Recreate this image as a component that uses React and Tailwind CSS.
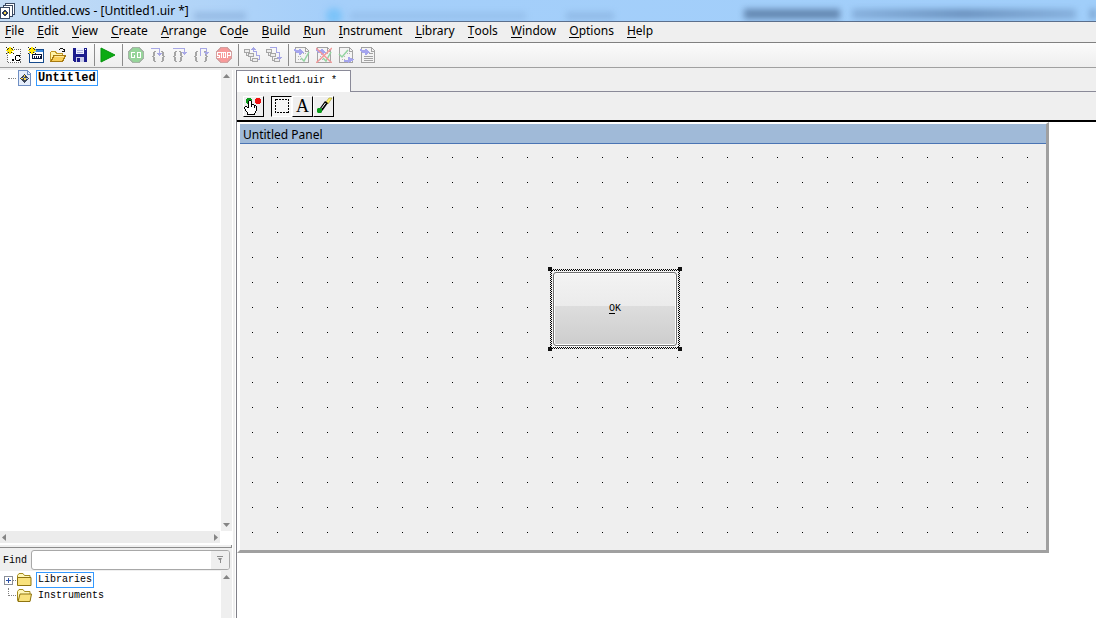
import React from "react";

const MENUS = [
  ["", "F", "ile"],
  ["", "E", "dit"],
  ["", "V", "iew"],
  ["", "C", "reate"],
  ["", "A", "rrange"],
  ["Co", "d", "e"],
  ["", "B", "uild"],
  ["", "R", "un"],
  ["", "I", "nstrument"],
  ["", "L", "ibrary"],
  ["", "T", "ools"],
  ["", "W", "indow"],
  ["", "O", "ptions"],
  ["", "H", "elp"],
];

function Icon({ children, crisp = true, className = "size-4", box = "0 0 16 16" }) {
  return (
    <svg
      viewBox={box}
      fill="none"
      aria-hidden="true"
      shapeRendering={crisp ? "crispEdges" : "auto"}
      className={`shrink-0 ${className}`}
    >
      {children}
    </svg>
  );
}

function Spark() {
  return (
    <>
      <path d="M0 0h8v7h-8z" fill="#fff" fillOpacity=".5" />
      <path d="M3 0h2v7h-2zM0 3h8v1h-8zM1 1h1v1h-1zM2 2h4v3h-4zM6 1h1v1h-1zM1 5h1v1h-1zM6 5h1v1h-1z" fill="#ffe800" />
      <path d="M0 0h1v1h-1zM7 0h1v1h-1zM0 6h1v1h-1zM7 6h1v1h-1zM2 1h1v1h-1zM5 1h1v1h-1zM2 5h1v1h-1zM5 5h1v1h-1zM1 2h1v1h-1zM6 2h1v1h-1z" fill="#222" />
    </>
  );
}

function NewSource() {
  return (
    <Icon>
      <path d="M1.500 2.500h13v13h-13z" fill="#fff" stroke="#666" strokeDasharray="1 1" />
      <path d="M6 12h2v2h-2z" fill="#000" />
      <path d="M10 8h4v1h-4zM9 9h1v4h-1zM10 13h4v1h-4zM13 9h1v1h-1zM13 12h1v1h-1z" fill="#000" />
      <Spark />
    </Icon>
  );
}

function NewPanel() {
  return (
    <Icon>
      <path d="M1.500 2.500h14v13h-14z" fill="#fff" stroke="#164a8c" />
      <path d="M2 3h13v2h-13z" fill="#3b8be0" />
      <path d="M4.500 7.500h9v4h-9z" fill="#fff" stroke="#08183b" />
      <path d="M6 9h1v2h-1zM8 9h1v2h-1zM10 9h1v2h-1zM12 9h1v2h-1z" fill="#08183b" />
      <Spark />
    </Icon>
  );
}

function OpenFolder() {
  return (
    <Icon>
      <path d="M9 2h1v1h-1zM10 1h3v1h-3zM13 2h1v1h-1zM14 2h1v3h-1zM12 4h2v1h-2z" fill="#111" />
      <path d="M.5 14.500v-9l1-1h4l1 2h6v3" fill="#fff3a8" stroke="#c39a2a" />
      <path d="M1 14.500l3-6h11.500l-3 6z" fill="#f9cf5a" stroke="#a87a10" />
      <path d="M5 9.500h9" stroke="#ffe9a0" />
    </Icon>
  );
}

function Save() {
  return (
    <Icon>
      <path d="M1 1h14v14h-13l-1-1z" fill="#1c1c8c" />
      <path d="M4 1h8v6h-8z" fill="#eef0ff" />
      <path d="M5 3h6v1h-6zM5 5h6v1h-6z" fill="#a9b0dc" />
      <path d="M4 10h8v5h-8z" fill="#c9cce8" />
      <path d="M5 11h3v4h-3z" fill="#1c1c8c" />
      <path d="M13 2h1v1h-1z" fill="#fff" />
    </Icon>
  );
}

function Play() {
  return (
    <Icon crisp={false}>
      <path d="M1 1l14 7l-14 7z" fill="#0cab14" stroke="#05940c" />
    </Icon>
  );
}

function Go() {
  return (
    <Icon>
      <path d="M5 0.5h6l4.500 4.500v6l-4.500 4.500h-6l-4.500-4.500v-6z" fill="#96d59a" stroke="#a4b5a5" />
      <path d="M7 5.500h-3.500v5h3v-2.500h-1M9.500 5.500h3v5h-3z" stroke="#fff" />
    </Icon>
  );
}

function Stop() {
  return (
    <Icon>
      <path d="M5 0.5h6l4.500 4.500v6l-4.500 4.500h-6l-4.500-4.500v-6z" fill="#f79a9a" stroke="#d3a0a0" />
      <path d="M4 5.500h-2.500v2.500h2v2.500h-2.500M4 5.500h3M5.500 5.500v5.500M7.500 5.500h2v5h-2zM11.500 11v-5.500h2.500v2.500h-2.500" stroke="#fff" />
    </Icon>
  );
}

const BRACE = "M2 4h2v1h-2zM1 5h2v4h-2zM0 9h2v1h-2zM1 10h2v4h-2zM2 14h2v1h-2z";

function Braces({ left, right, arrow, head }) {
  return (
    <Icon>
      <path transform={`translate(${left} 0)`} d={BRACE} fill="#a6a6a6" />
      <path transform={`translate(${right} 0) scale(-1 1)`} d={BRACE} fill="#a6a6a6" />
      <path d={arrow} stroke="#a9a9e6" />
      <path d={head} fill="#a9a9e6" />
    </Icon>
  );
}

const StepInto = () => (
  <Braces left={2} right={15} arrow="M1 1.500h8.500v5" head="M7 6h5v1h-1v1h-1v1h-1v-1h-1v-1h-1z" />
);
const StepOver = () => (
  <Braces left={1} right={11} arrow="M1 1.500h11.500v4" head="M10 5h5v1h-1v1h-1v1h-1v-1h-1v-1h-1z" />
);
const StepOut = () => (
  <Braces left={0} right={14} arrow="M6.500 9v-7.500h6v4" head="M10 5h5v1h-1v1h-1v1h-1v-1h-1v-1h-1z" />
);

function CallStack({ up }) {
  return (
    <Icon>
      <path d="M.5 2.500h5v3h-5zM4.500 6.500h5v3h-5zM8.500 11.500h5v3h-5zM2.500 6v2h2M6.500 10v3h2" stroke="#a6a6a6" fill="#ededed" />
      {up ? (
        <>
          <path d="M14 12.500h1.500v-4h-3v-4h-3v-3" stroke="#a5a5e6" />
          <path d="M9 0h1v1h1v1h1v1h-5v-1h1v-1h1z" fill="#a5a5e6" />
        </>
      ) : (
        <>
          <path d="M4 .5h6.500v5h3v6" stroke="#a5a5e6" />
          <path d="M11 10h5v1h-1v1h-1v1h-1v-1h-1v-1h-1z" fill="#a5a5e6" />
        </>
      )}
    </Icon>
  );
}

function Sheet({ kind }) {
  return (
    <Icon>
      <path d="M1.500 .5h10l3 3v12h-13z" fill="#f4f4f4" stroke="#a3a3a3" />
      <path d="M11.500 1v3h3" stroke="#a3a3a3" />
      {kind === "list" && <path d="M9 6.500h4M4 9.500h9M4 11.500h9M4 13.500h9" stroke="#a3a3a3" />}
      {kind !== "list" && <path d="M4 9.500h3M4 12.500h3M9 6.500h3" stroke="#b5b5b5" strokeDasharray="1 1" />}
      {kind === "next" ? (
        <>
          <path d="M1 7l3 3l6-7" stroke="#93d4a0" strokeWidth="1.500" shapeRendering="auto" />
          <path d="M6 13h4v-3h2v1h2v1h2v1h-1v1h-2v1h-2v1h-1v-1h-4z" fill="#a5a5ee" />
        </>
      ) : (
        <path d="M0 2h2v1h3v-1h2v1h1v1h1v1h1v1h-2v1h-1v1h-2v-2h-3v-1h-1v-1h-1z" fill="#a5a5ee" />
      )}
      {(kind === "mark" || kind === "clear") && (
        <path d="M7 11l3 3l5-9" stroke="#93d4a0" strokeWidth="1.500" shapeRendering="auto" />
      )}
      {kind === "clear" && <path d="M0 1l16 15M16 1l-16 15" stroke="#f39a9a" strokeWidth="1.500" shapeRendering="auto" />}
    </Icon>
  );
}

function ProjectGlyph() {
  return (
    <Icon>
      <path d="M2.500 .5h9l3 3v12h-12z" fill="#e6eefb" stroke="#6f8fc4" />
      <path d="M11.500 1v3h3" stroke="#6f8fc4" />
      <path d="M8 4h1v1h1v1h1v1h1v1h1v1h-1v1h-1v1h-1v1h-1v1h-1v-1h-1v-1h-1v-1h-1v-1h-1v-1h1v-1h1v-1h1v-1h1z" fill="#3d4658" />
      <path d="M8 5h1v2h-1zM5 8h2v1h-2zM8 8h2v2h-2z" fill="#ffd94a" />
      <path d="M10 8h2v1h-2zM7 7h1v1h-1z" fill="#a9c0e8" />
    </Icon>
  );
}

function WorkspaceGlyph() {
  return (
    <Icon>
      <path d="M5.500 .5h9v11h-9z" fill="#fff" stroke="#3b4a63" />
      <path d="M3.500 2.500h9v11h-9z" fill="#fff" stroke="#3b4a63" />
      <path d="M.5 4.500h9v11h-9z" fill="#fff" stroke="#3b4a63" />
      <path d="M4 7h2v1h1v1h1v2h-1v1h-1v1h-2v-1h-1v-1h-1v-2h1v-1h1z" fill="#33405a" />
      <path d="M4 9h2v2h-2z" fill="#ffd94a" />
    </Icon>
  );
}

function Folder({ open }) {
  return (
    <Icon crisp={false}>
      <path d="M1.500 12.500v-9l1.500-2h4l1.500 2h5.500v9z" fill="#fff7b8" stroke="#a48a1c" />
      {open ? (
        <path d="M2 13.500l2-7.500h11.500l-1.500 7.500z" fill="#f9e27c" stroke="#8f7410" />
      ) : (
        <path d="M1.500 13.500v-8h13.500v8z" fill="#f9e27c" stroke="#8f7410" />
      )}
    </Icon>
  );
}

function Tri({ dir }) {
  const shape = {
    up: "M3.500 1l3.500 4h-7z",
    down: "M0 2h7l-3.500 4z",
    left: "M5 0v7l-4-3.500z",
    right: "M2 0v7l4-3.500z",
  }[dir];
  return (
    <svg viewBox="0 0 7 7" aria-hidden="true" className="size-[7px]">
      <path d={shape} fill="#858585" />
    </svg>
  );
}

function ToolButton({ label, children }) {
  return (
    <button type="button" aria-label={label} className="flex h-6 w-[22px] items-center justify-center">
      {children}
    </button>
  );
}

function Separator() {
  return (
    <div className="flex w-[6px] justify-center">
      <div className="h-[22px] w-px bg-[#8c8c8c]" />
    </div>
  );
}

function EditTool({ label, pressed, children }) {
  const edge = pressed
    ? "border-t-black border-l-black border-r-white border-b-white bg-[#f6f6f6]"
    : "border-t-white border-l-white border-r-black border-b-black bg-[#efefef]";
  return (
    <button
      type="button"
      aria-label={label}
      aria-pressed={pressed}
      className={`flex size-[21px] items-center justify-center border ${edge}`}
    >
      {children}
    </button>
  );
}

function Toolbar() {
  return (
    <div role="toolbar" aria-label="Main" className="flex h-[25px] shrink-0 items-center border-b border-[#a0a0a0] bg-linear-to-b from-[#fbfbfb] to-[#eeeeee] pl-[3px]">
      <ToolButton label="New source"><NewSource /></ToolButton>
      <ToolButton label="New user interface"><NewPanel /></ToolButton>
      <ToolButton label="Open"><OpenFolder /></ToolButton>
      <ToolButton label="Save"><Save /></ToolButton>
      <Separator />
      <ToolButton label="Debug project"><Play /></ToolButton>
      <Separator />
      <ToolButton label="Continue"><Go /></ToolButton>
      <ToolButton label="Step into"><StepInto /></ToolButton>
      <ToolButton label="Step over"><StepOver /></ToolButton>
      <ToolButton label="Step out"><StepOut /></ToolButton>
      <ToolButton label="Terminate"><Stop /></ToolButton>
      <Separator />
      <ToolButton label="Up call stack"><CallStack up /></ToolButton>
      <ToolButton label="Down call stack"><CallStack /></ToolButton>
      <Separator />
      <ToolButton label="Mark file"><Sheet kind="mark" /></ToolButton>
      <ToolButton label="Unmark file"><Sheet kind="clear" /></ToolButton>
      <ToolButton label="Next file"><Sheet kind="next" /></ToolButton>
      <ToolButton label="File contents"><Sheet kind="list" /></ToolButton>
    </div>
  );
}

function Sidebar() {
  return (
    <aside className="flex w-[232px] shrink-0 flex-col bg-[#efefef] font-['Liberation_Mono','Noto_Sans_CJK_SC',monospace] text-[10px]">
      <div className="flex min-h-0 flex-1 bg-white">
        <ul className="min-w-0 flex-1">
          <li className="flex h-4 items-center pl-2">
            <span className="w-2 border-t border-dotted border-[#808080]" />
            <ProjectGlyph />
            <span className="ml-1 flex h-4 items-center border border-[#3399ff] px-px text-xs font-bold">Untitled</span>
          </li>
        </ul>
        <div className="flex w-[11px] flex-col items-center justify-between bg-[#efefef] py-[3px] pr-px">
          <Tri dir="up" />
          <Tri dir="down" />
        </div>
      </div>
      <div className="flex h-[14px] bg-white pr-3">
        <div className="flex h-3 flex-1 items-center justify-between bg-[#ececec] px-px">
          <Tri dir="left" />
          <Tri dir="right" />
        </div>
      </div>
      <div className="h-[3px] border-r border-b border-[#8c8c8c]" />
      <div className="flex h-[23px] items-center pr-0.5 pl-[3px]">
        <label htmlFor="find" className="w-7 pt-0.5 text-[10px] text-black">Find</label>
        <div className="flex h-5 flex-1 overflow-hidden rounded-[3px] border border-[#a8a8a8] bg-white">
          <input id="find" className="min-w-0 flex-1 px-1 outline-none" />
          <button type="button" aria-label="Filter" className="flex w-[18px] items-center justify-center bg-[#efefef]">
            <svg viewBox="0 0 8 8" aria-hidden="true" className="size-2">
              <path d="M1 0h6v1h-6zM2 2h4l-1 2v3h-1v-3h-1z" fill="#8c8c8c" />
            </svg>
          </button>
        </div>
      </div>
      <div className="flex h-[47px] bg-white">
        <ul className="min-w-0 flex-1 pt-px">
          <li className="flex h-4 items-center pl-1">
            <svg viewBox="0 0 9 9" aria-hidden="true" shapeRendering="crispEdges" className="size-[9px]">
              <path d="M.5 .5h8v8h-8z" fill="#fff" stroke="#8a8f99" />
              <path d="M2 4.500h5M4.500 2v5" stroke="#2a50a8" />
            </svg>
            <span className="w-[3px] border-t border-dotted border-[#808080]" />
            <Folder />
            <span className="ml-1 flex h-4 items-center border border-[#3399ff] px-px">Libraries</span>
          </li>
          <li className="flex h-4 items-center pl-2">
            <span className="h-2 w-2 self-start border-b border-l border-dotted border-[#808080]" />
            <Folder open />
            <span className="ml-1 px-0.5">Instruments</span>
          </li>
        </ul>
        <div className="flex w-[11px] justify-center bg-[#efefef] pt-[3px] pr-px">
          <Tri dir="up" />
        </div>
      </div>
    </aside>
  );
}

function EditTools() {
  return (
    <div role="toolbar" aria-label="Editing" className="flex h-[30px] shrink-0 items-center border-b-2 border-black bg-[#efefef] pl-[6px]">
      <EditTool label="Operate">
        <Icon className="size-[19px]" box="0 0 19 19">
          <path d="M3 1h4v1h1v4h-1v1h-4v-1h-1v-4h1z" fill="#0a9a1a" />
          <path d="M12 1h4v1h1v4h-1v1h-4v-1h-1v-4h1z" fill="#f01010" />
          <path d="M5 4h2v4h2v1h2v1h1v5h-1v2h-7v-2h-1v-1h-1v-2h-1v-2h2v1h2z" fill="#fff" />
          <path d="M5 3h2v1h-2zM4 4h1v7h-1zM7 4h1v6h-1zM8 7h2v1h-2zM10 8h2v1h-2zM10 8h1v3h-1zM12 9h1v5h-1zM1 9h2v1h-2zM0 10h1v2h-1zM3 10h1v1h-1zM1 12h1v2h-1zM2 14h1v1h-1zM3 15h1v3h-1zM11 14h1v2h-1zM10 16h1v2h-1zM3 17h8v1h-8z" fill="#000" />
        </Icon>
      </EditTool>
      <div className="w-[7px]" />
      <EditTool label="Select" pressed>
        <Icon>
          <path d="M1.500 1.500h13v13h-13z" stroke="#000" strokeDasharray="2 1" />
        </Icon>
      </EditTool>
      <EditTool label="Label">
        <span className="font-['Liberation_Serif',serif] text-[18px] leading-none">A</span>
      </EditTool>
      <EditTool label="Color">
        <Icon crisp={false} className="size-[19px]" box="0 0 19 19">
          <path d="M12 5l3-4h3l-4 6z" fill="#fff36b" stroke="#8a8200" strokeWidth=".5" />
          <path d="M6 11l5-7l3 2l-5 7l-2 2z" fill="#000" />
          <path d="M7.500 11.500l4-5.500" stroke="#fff" />
          <path d="M4 11h3l1 1v3l-1 1h-3l-1-1v-3z" fill="#0a9a1a" />
        </Icon>
      </EditTool>
    </div>
  );
}

function Handle({ className }) {
  return <span className={`absolute size-1 bg-[#111] ${className}`} />;
}

function DesignPanel() {
  return (
    <section className="flex h-[431px] w-[812px] max-w-full flex-col border-t-2 border-r-[3px] border-b-[3px] border-l-[3px] border-t-white border-r-[#a0a0a0] border-b-[#a0a0a0] border-l-white bg-[#efefef]">
      <h2 className="flex h-5 shrink-0 items-center border-b border-[#4a74b4] bg-[#a0bad8] pt-0.5 pl-[3px] text-xs">Untitled Panel</h2>
      <div className="relative flex-1 bg-[conic-gradient(at_1px_1px,transparent_75%,#000_0)] bg-[length:25px_25px] bg-[position:12px_13px]">
        <div className="absolute top-[125px] left-[310px] h-20 w-[130px] bg-[conic-gradient(#000_25%,#efefef_0_50%,#000_0_75%,#efefef_0)] bg-[length:2px_2px] p-0.5">
          <div className="h-full bg-[#f4f4f4] p-px">
            <button
              type="button"
              className="flex h-full w-full items-center justify-center rounded-[3px] border border-[#707070] bg-[linear-gradient(#f3f3f3,#ebebeb_46%,#dddddd_46%,#cdcdcd)] font-['Liberation_Mono',monospace] text-[10px] shadow-[inset_0_0_0_1px_#fbfbfb]"
            >
              <span><u className="underline-offset-2">O</u>K</span>
            </button>
          </div>
          <Handle className="-top-0.5 -left-0.5" />
          <Handle className="-top-0.5 -right-0.5" />
          <Handle className="-bottom-0.5 -left-0.5" />
          <Handle className="-right-0.5 -bottom-0.5" />
        </div>
      </div>
    </section>
  );
}

export default function App() {
  return (
    <div className="flex h-screen flex-col overflow-hidden bg-[#efefef] font-['Noto_Sans','Noto_Sans_CJK_SC',sans-serif] text-xs text-black">
      <header className="relative flex h-[22px] shrink-0 items-center gap-1 overflow-hidden border-b border-[#5b6f8c] bg-linear-to-r from-[#c4dcf5] via-[#a5cffa] via-30% to-[#a0cefa]">
        <WorkspaceGlyph />
        <h1 className="pl-px">Untitled.cws - [Untitled1.uir *]</h1>
        <div aria-hidden="true" className="absolute top-[9px] right-[256px] h-2.5 w-24 bg-[#4f7099] opacity-75 blur-[3px]" />
        <div aria-hidden="true" className="absolute top-[9px] right-[20px] h-2.5 w-56 bg-linear-to-r from-[#7ba3d0] via-[#5579a6] to-[#7ba3d0] opacity-70 blur-[3px]" />
        <div aria-hidden="true" className="absolute top-[9px] right-0 h-2.5 w-1.5 bg-[#5f84b0] opacity-60 blur-[3px]" />
        <div aria-hidden="true" className="absolute top-2 left-[326px] size-4 rounded-full bg-[#7cc3f8] blur-[3px]" />
        <div aria-hidden="true" className="absolute top-3 left-[350px] h-2 w-44 bg-[#85aedb] opacity-40 blur-[3px]" />
        <div aria-hidden="true" className="absolute top-3 left-[566px] h-2 w-12 bg-[#85aedb] opacity-60 blur-[3px]" />
        <div aria-hidden="true" className="absolute top-3 left-[194px] h-2 w-13 bg-[#7da3d0] opacity-50 blur-[3px]" />
      </header>
      <nav aria-label="Menu bar" className="flex h-[21px] shrink-0 items-center gap-[13px] border-b border-[#808080] pb-0.5 pl-[5px]">
        {MENUS.map(([before, key, after]) => (
          <button type="button" key={before + key + after}>
            {before}
            <span className="inline-block border-b border-black leading-3">{key}</span>
            {after}
          </button>
        ))}
      </nav>
      <Toolbar />
      <div className="flex min-h-0 flex-1 pt-0.5">
        <Sidebar />
        <div className="w-1 shrink-0 border-x border-white bg-[#efefef]" />
        <main className="flex min-w-0 flex-1 flex-col border-l border-[#808088]">
          <div role="tablist" className="flex h-[22px] shrink-0">
            <button
              type="button"
              role="tab"
              aria-selected="true"
              className="w-[114px] border-t border-r border-[#8a8a98] bg-white pb-0.5 pl-[10px] text-left font-['Liberation_Mono',monospace] text-[10px]"
            >
              Untitled1.uir *
            </button>
            <div className="flex-1 border-b border-[#8a8a98]" />
          </div>
          <EditTools />
          <div className="min-h-0 flex-1 overflow-hidden bg-white">
            <DesignPanel />
          </div>
        </main>
      </div>
    </div>
  );
}
